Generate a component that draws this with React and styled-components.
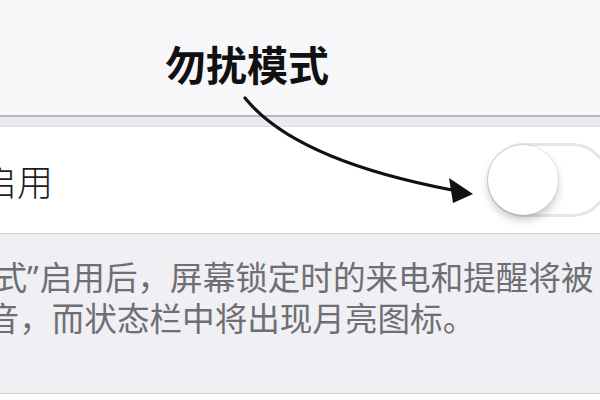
import React from "react";
import styled, { createGlobalStyle } from "styled-components";

const Global = createGlobalStyle`
  html, body { margin: 0; padding: 0; background: #ffffff; }
  body { font-family: "Noto Sans CJK SC", "Noto Sans", sans-serif; }
`;

const Page = styled.div`
  position: relative;
  width: 600px;
  height: 400px;
  overflow: hidden;
  display: flex;
  flex-direction: column;
  background: #ffffff;
`;

const Header = styled.div`
  height: 117px;
  flex: none;
  background: #f7f7f9;
  border-bottom: 2px solid #b8b8be;
  box-sizing: border-box;
  padding: 36px 0 0 165px;
`;

const Title = styled.h1`
  margin: 0;
  font-size: 41px;
  line-height: 54px;
  font-weight: 700;
  color: #111111;
`;

const Gap = styled.div`
  height: 9px;
  flex: none;
  background: #eaeaef;
  border-bottom: 1px solid #dcdce1;
`;

const Row = styled.div`
  height: 107px;
  flex: none;
  background: #ffffff;
  border-bottom: 1px solid #d2d2d6;
  box-sizing: border-box;
  display: flex;
  align-items: center;
  justify-content: space-between;
`;

const Label = styled.span`
  margin-left: -19px;
  font-size: 36px;
  font-weight: 300;
  color: #1c1c1c;
`;

const Track = styled.div`
  width: 122px;
  height: 74px;
  margin-right: -9px;
  border-radius: 37px;
  border: 3px solid #e6e6ea;
  box-sizing: border-box;
  background: #ffffff;
  display: flex;
  align-items: center;
`;

const Knob = styled.div`
  width: 70px;
  height: 70px;
  margin-left: -2px;
  border-radius: 50%;
  background: #ffffff;
  box-shadow: 0 0 0 1px rgba(0, 0, 0, 0.06), 0 5px 9px rgba(0, 0, 0, 0.22);
`;

const Footer = styled.div`
  height: 160px;
  flex: none;
  background: #efeff4;
  border-bottom: 1px solid #cfcfd4;
  box-sizing: border-box;
  padding-top: 22px;
  overflow: hidden;
`;

const Note = styled.p`
  margin: 0 0 0 -46px;
  text-indent: -70px;
  white-space: nowrap;
  font-size: 32.6px;
  line-height: 39px;
  color: #6e6e73;
  font-weight: 400;
`;

const Quote = styled.span`
  font-family: "Noto Sans", "DejaVu Sans", sans-serif;
  letter-spacing: 1px;
`;

const Arrow = styled.svg`
  position: absolute;
  left: 0;
  top: 0;
  pointer-events: none;
`;

export default function App() {
  return (
    <>
      <Global />
      <Page>
        <Header>
          <Title>勿扰模式</Title>
        </Header>
        <Gap />
        <Row>
          <Label>启用</Label>
          <Track>
            <Knob />
          </Track>
        </Row>
        <Footer>
          <Note>
            <Quote>“</Quote>勿扰模式<Quote>”</Quote>启用后，屏幕锁定时的来电和提醒将被
            <br />
            静音，而状态栏中将出现月亮图标。
          </Note>
        </Footer>
        <Arrow width="600" height="400" viewBox="0 0 600 400">
          <path d="M245 98 Q295 160 452 190" fill="none" stroke="#111" strokeWidth="3.2" strokeLinecap="round" />
          <polygon points="473,194 449,178 453,203" fill="#111" />
        </Arrow>
      </Page>
    </>
  );
}
